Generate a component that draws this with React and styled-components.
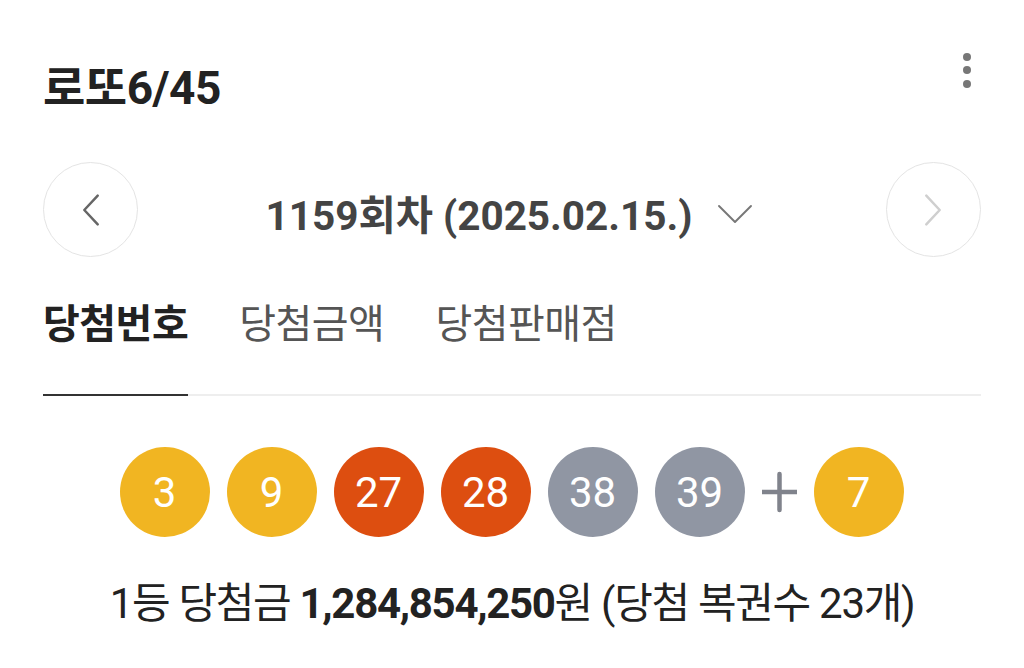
import React from 'react';
import styled, { createGlobalStyle } from 'styled-components';

const GlobalStyle = createGlobalStyle`
  html, body {
    margin: 0;
    padding: 0;
    background: #fff;
  }
  body {
    font-family: Roboto, "Noto Sans CJK KR", sans-serif;
    color: #222;
  }
`;

const Page = styled.div`
  width: 1024px;
  height: 668px;
  box-sizing: border-box;
  padding: 0 43px;
  overflow: hidden;
`;

const Header = styled.header`
  display: flex;
  align-items: flex-start;
  justify-content: space-between;
  height: 162px;
`;

const Title = styled.h1`
  margin: 58px 0 0;
  font-size: 46px;
  line-height: 60px;
  font-weight: 700;
  color: #222;
  letter-spacing: -0.5px;
`;

const MoreButton = styled.button`
  margin-top: 50px;
  width: 28px;
  height: 40px;
  border: 0;
  background: none;
  padding: 0;
  display: flex;
  flex-direction: column;
  align-items: center;
  justify-content: center;
  gap: 5.5px;
`;

const Dot = styled.span`
  width: 8px;
  height: 8px;
  border-radius: 50%;
  background: #777;
`;

const RoundBar = styled.div`
  display: flex;
  align-items: center;
  justify-content: space-between;
`;

const CircleButton = styled.button`
  width: 95px;
  height: 95px;
  border-radius: 50%;
  border: 1.5px solid #e4e4e4;
  background: #fff;
  display: flex;
  align-items: center;
  justify-content: center;
  padding: 0;
  color: ${(p) => (p.disabled ? '#cfcfcf' : '#666')};
`;

const RoundTitle = styled.div`
  display: flex;
  align-items: center;
  gap: 18px;
  font-size: 40.5px;
  font-weight: 700;
  color: #444;
  margin-top: 6px;
`;

const Tabs = styled.div`
  display: flex;
  gap: 51px;
  margin-top: 40px;
  border-bottom: 2px solid #eeeeee;
`;

const Tab = styled.div`
  font-size: 40px;
  line-height: 56px;
  font-weight: ${(p) => (p.active ? 700 : 400)};
  color: ${(p) => (p.active ? '#222' : '#555')};
  padding-bottom: 41px;
  margin-bottom: -2px;
  border-bottom: 2.5px solid ${(p) => (p.active ? '#333' : 'transparent')};
  letter-spacing: -0.5px;
`;

const Balls = styled.div`
  display: flex;
  align-items: center;
  justify-content: center;
  gap: 17px;
  margin-top: 51px;
  padding-right: 1px;
`;

const Ball = styled.div`
  width: 90px;
  height: 90px;
  border-radius: 50%;
  background: ${(p) => p.color};
  color: #fff;
  display: flex;
  align-items: center;
  justify-content: center;
  font-size: 42px;
  font-weight: 400;
`;

const Plus = styled.svg`
  width: 35px;
  height: 46px;
`;

const Summary = styled.p`
  margin: 39px 0 0;
  text-align: center;
  font-size: 42px;
  line-height: 56px;
  color: #222;
  letter-spacing: -1.3px;
  white-space: nowrap;
`;

const Strong = styled.b`
  font-weight: 700;
`;

const colorOf = (n) => {
  if (n <= 10) return '#f1b522';
  if (n <= 20) return '#4a8fd8';
  if (n <= 30) return '#dd4e10';
  if (n <= 40) return '#9096a3';
  return '#7dbb4a';
};

const numbers = [3, 9, 27, 28, 38, 39];
const bonus = 7;

const Chevron = ({ d, size = 30, stroke = 'currentColor', width = 1.5 }) => (
  <svg width={size} height={size} viewBox="0 0 24 24" fill="none" stroke={stroke} strokeWidth={width} strokeLinecap="round" strokeLinejoin="round">
    <path d={d} />
  </svg>
);

export default function App() {
  return (
    <Page>
      <GlobalStyle />
      <Header>
        <Title>로또6/45</Title>
        <MoreButton aria-label="더보기">
          <Dot />
          <Dot />
          <Dot />
        </MoreButton>
      </Header>
      <RoundBar>
        <CircleButton aria-label="이전 회차">
          <Chevron d="M15.5 4.5l-7 7.5 7 7.5" size={46} width={1.3} />
        </CircleButton>
        <RoundTitle>
          1159회차 (2025.02.15.)
          <Chevron d="M4 8.5l8 8 8-8" size={48} stroke="#777" width={0.95} />
        </RoundTitle>
        <CircleButton aria-label="다음 회차" disabled>
          <Chevron d="M8.5 4.5l7 7.5-7 7.5" size={46} width={1.3} />
        </CircleButton>
      </RoundBar>
      <Tabs>
        <Tab active>당첨번호</Tab>
        <Tab>당첨금액</Tab>
        <Tab>당첨판매점</Tab>
      </Tabs>
      <Balls>
        {numbers.map((n) => (
          <Ball key={n} color={colorOf(n)}>{n}</Ball>
        ))}
        <Plus viewBox="0 0 35 46">
          <path d="M17.5 5v36M-0.5 23h36" stroke="#80838c" strokeWidth="4.5" strokeLinecap="round" />
        </Plus>
        <Ball color={colorOf(bonus)}>{bonus}</Ball>
      </Balls>
      <Summary>
        1등 당첨금 <Strong>1,284,854,250</Strong>원 (당첨 복권수 23개)
      </Summary>
    </Page>
  );
}
